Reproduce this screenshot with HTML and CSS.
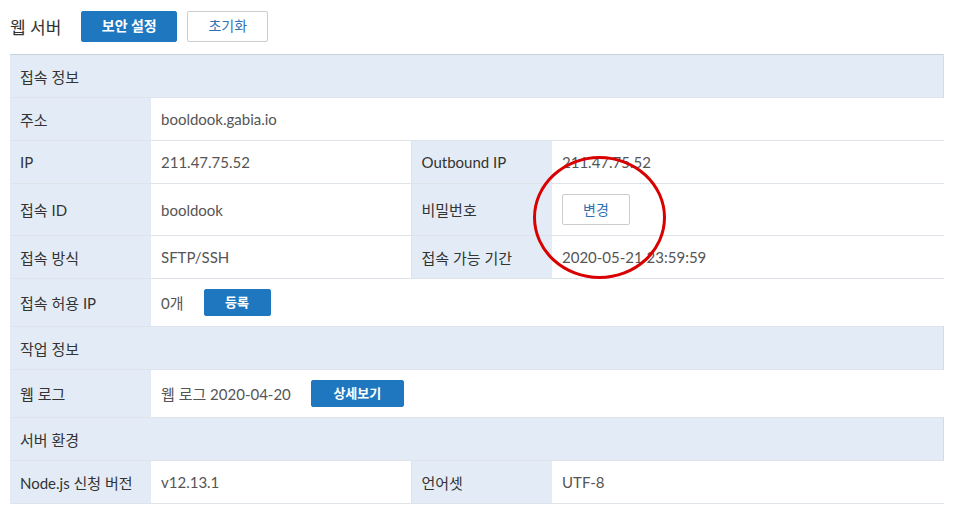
FILE: index.html
```html
<!DOCTYPE html>
<html lang="ko">
<head>
<meta charset="utf-8">
<link rel="stylesheet" href="styles.css">
</head>
<body>
<div class="page">
  <div class="titlebar">
    <h1 class="title">웹 서버</h1>
    <button class="btn btn-primary btn-lg">보안 설정</button>
    <button class="btn btn-default btn-lg">초기화</button>
  </div>
  <table class="info">
    <colgroup>
      <col class="c-label"><col class="c-value"><col class="c-label2"><col>
    </colgroup>
    <tr class="section"><td colspan="4">접속 정보</td></tr>
    <tr><th>주소</th><td colspan="3">booldook.gabia.io</td></tr>
    <tr><th>IP</th><td>211.47.75.52</td><th class="th2">Outbound IP</th><td>211.47.75.52</td></tr>
    <tr class="tall"><th>접속 ID</th><td>booldook</td><th class="th2">비밀번호</th><td class="annotated"><button class="btn btn-default btn-md">변경</button><span class="circle"></span></td></tr>
    <tr><th>접속 방식</th><td>SFTP/SSH</td><th class="th2">접속 가능 기간</th><td>2020-05-21 23:59:59</td></tr>
    <tr class="mid"><th>접속 허용 IP</th><td colspan="3"><span class="inline-val">0개</span><button class="btn btn-primary btn-sm">등록</button></td></tr>
    <tr class="section"><td colspan="4">작업 정보</td></tr>
    <tr class="mid"><th>웹 로그</th><td colspan="3"><span class="inline-val">웹 로그 2020-04-20</span><button class="btn btn-primary btn-sm btn-wide">상세보기</button></td></tr>
    <tr class="section"><td colspan="4">서버 환경</td></tr>
    <tr><th>Node.js 신청 버전</th><td>v12.13.1</td><th class="th2">언어셋</th><td>UTF-8</td></tr>
  </table>
</div>
</body>
</html>
```

FILE: styles.css
```css
html, body {
  margin: 0;
  padding: 0;
  background: #fff;
}
body {
  font-family: Lato, "Noto Sans CJK KR", sans-serif;
  color: #333;
  font-size: 15px;
}
.page {
  padding: 11px 15px 0 10px;
}
.titlebar {
  display: flex;
  align-items: center;
  height: 30px;
  margin-bottom: 13px;
}
.title {
  margin: 0 20px 0 0;
  font-size: 17px;
  font-weight: normal;
  color: #333;
}
.btn {
  font-family: Lato, "Noto Sans CJK KR", sans-serif;
  font-size: 14px;
  border-radius: 2px;
  cursor: pointer;
  padding: 0;
  line-height: 1;
}
.btn-primary {
  background: #1f78bf;
  border: 1px solid #1f78bf;
  color: #fff;
  font-weight: bold;
}
.btn-default {
  background: #fff;
  border: 1px solid #ccc;
  color: #2f72b4;
}
.btn-lg {
  height: 31px;
  width: 96px;
  margin-right: 10px;
}
.btn-lg.btn-default {
  width: 81px;
}
.btn-md {
  height: 31px;
  width: 68px;
}
.btn-sm {
  height: 27px;
  width: 67px;
  font-size: 13px;
}
.btn-wide {
  width: 93px;
}
.info {
  width: 934px;
  border-collapse: collapse;
  table-layout: fixed;
  border-top: 1px solid #c9d2dc;
}
.c-label { width: 141px; }
.c-value { width: 260px; }
.c-label2 { width: 141px; }
.info tr {
  height: 43px;
  border-bottom: 1px solid #dfe4ea;
}
.info tr.tall { height: 52px; }
.info tr.mid { height: 48px; }
.info th, .info td {
  padding: 0 10px;
  text-align: left;
  font-weight: normal;
  vertical-align: middle;
  white-space: nowrap;
}
.info th {
  background: #e3ecf6;
  color: #333;
}
.info th.th2 {
  border-left: 1px solid #dfe4ea;
}
.info td {
  color: #555;
}
.info tr.section td {
  background: #e3ecf6;
  color: #333;
  border-right: 1px solid #d3dbe4;
}
.inline-val {
  display: inline-block;
  margin-right: 20px;
  vertical-align: middle;
}
.info td .btn {
  vertical-align: middle;
}
.annotated {
  position: relative;
}
.circle {
  position: absolute;
  left: -19px;
  top: -28px;
  width: 133px;
  height: 123px;
  border: 3px solid #d90000;
  border-radius: 50%;
  box-sizing: border-box;
  pointer-events: none;
}
```
